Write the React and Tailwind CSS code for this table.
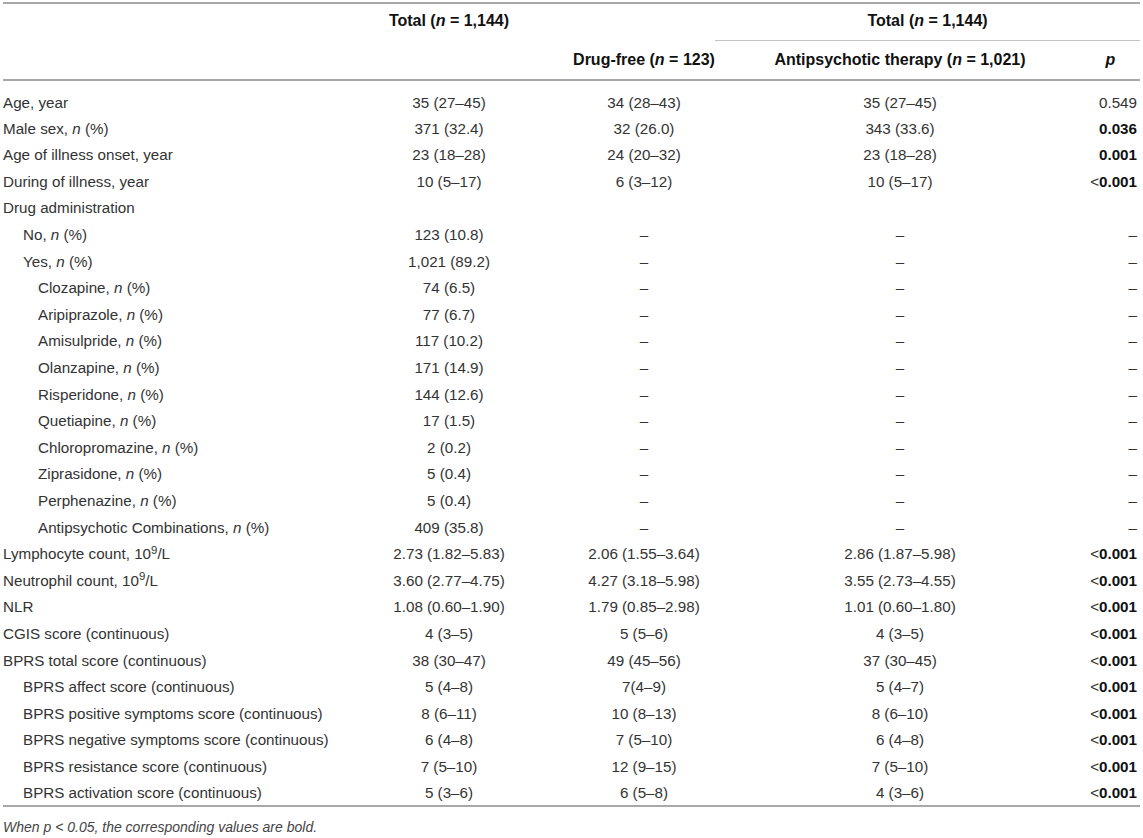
import React from "react";

const N = () => <i>n</i>;

const rows = [
  { l: <>Age, year</>, t: "35 (27–45)", d: "34 (28–43)", a: "35 (27–45)", p: "0.549" },
  { l: <>Male sex, <N /> (%)</>, t: "371 (32.4)", d: "32 (26.0)", a: "343 (33.6)", p: "0.036", b: true },
  { l: <>Age of illness onset, year</>, t: "23 (18–28)", d: "24 (20–32)", a: "23 (18–28)", p: "0.001", b: true },
  { l: <>During of illness, year</>, t: "10 (5–17)", d: "6 (3–12)", a: "10 (5–17)", lt: true },
  { l: <>Drug administration</>, t: "", d: "", a: "", p: "" },
  { l: <>No, <N /> (%)</>, i: 1, t: "123 (10.8)", d: "–", a: "–", p: "–" },
  { l: <>Yes, <N /> (%)</>, i: 1, t: "1,021 (89.2)", d: "–", a: "–", p: "–" },
  { l: <>Clozapine, <N /> (%)</>, i: 2, t: "74 (6.5)", d: "–", a: "–", p: "–" },
  { l: <>Aripiprazole, <N /> (%)</>, i: 2, t: "77 (6.7)", d: "–", a: "–", p: "–" },
  { l: <>Amisulpride, <N /> (%)</>, i: 2, t: "117 (10.2)", d: "–", a: "–", p: "–" },
  { l: <>Olanzapine, <N /> (%)</>, i: 2, t: "171 (14.9)", d: "–", a: "–", p: "–" },
  { l: <>Risperidone, <N /> (%)</>, i: 2, t: "144 (12.6)", d: "–", a: "–", p: "–" },
  { l: <>Quetiapine, <N /> (%)</>, i: 2, t: "17 (1.5)", d: "–", a: "–", p: "–" },
  { l: <>Chloropromazine, <N /> (%)</>, i: 2, t: "2 (0.2)", d: "–", a: "–", p: "–" },
  { l: <>Ziprasidone, <N /> (%)</>, i: 2, t: "5 (0.4)", d: "–", a: "–", p: "–" },
  { l: <>Perphenazine, <N /> (%)</>, i: 2, t: "5 (0.4)", d: "–", a: "–", p: "–" },
  { l: <>Antipsychotic Combinations, <N /> (%)</>, i: 2, t: "409 (35.8)", d: "–", a: "–", p: "–" },
  { l: <>Lymphocyte count, 10<sup>9</sup>/L</>, t: "2.73 (1.82–5.83)", d: "2.06 (1.55–3.64)", a: "2.86 (1.87–5.98)", lt: true },
  { l: <>Neutrophil count, 10<sup>9</sup>/L</>, t: "3.60 (2.77–4.75)", d: "4.27 (3.18–5.98)", a: "3.55 (2.73–4.55)", lt: true },
  { l: <>NLR</>, t: "1.08 (0.60–1.90)", d: "1.79 (0.85–2.98)", a: "1.01 (0.60–1.80)", lt: true },
  { l: <>CGIS score (continuous)</>, t: "4 (3–5)", d: "5 (5–6)", a: "4 (3–5)", lt: true },
  { l: <>BPRS total score (continuous)</>, t: "38 (30–47)", d: "49 (45–56)", a: "37 (30–45)", lt: true },
  { l: <>BPRS affect score (continuous)</>, i: 1, t: "5 (4–8)", d: "7(4–9)", a: "5 (4–7)", lt: true },
  { l: <>BPRS positive symptoms score (continuous)</>, i: 1, t: "8 (6–11)", d: "10 (8–13)", a: "8 (6–10)", lt: true },
  { l: <>BPRS negative symptoms score (continuous)</>, i: 1, t: "6 (4–8)", d: "7 (5–10)", a: "6 (4–8)", lt: true },
  { l: <>BPRS resistance score (continuous)</>, i: 1, t: "7 (5–10)", d: "12 (9–15)", a: "7 (5–10)", lt: true },
  { l: <>BPRS activation score (continuous)</>, i: 1, t: "5 (3–6)", d: "6 (5–8)", a: "4 (3–6)", lt: true },
];

export default function App() {
  return (
    <div
      className="w-[1143px] h-[838px] bg-white text-[#333] overflow-hidden pt-[2px]"
      style={{ fontFamily: '"Liberation Sans", Arial, sans-serif' }}
    >
      <table className="ml-[3px] w-[1137px] table-fixed border-collapse text-[15.2px] leading-none">
        <colgroup>
          <col className="w-[322px]" />
          <col className="w-[248px]" />
          <col className="w-[142px]" />
          <col className="w-[370px]" />
          <col className="w-[55px]" />
        </colgroup>
        <thead className="text-[16px]">
          <tr className="border-t-2 border-[#a8a8a8]">
            <th></th>
            <th className="h-[37px] text-center font-bold text-[#111] align-middle pb-[2px]">
              Total (<i>n</i> = 1,144)
            </th>
            <th></th>
            <th colSpan={2} className="h-[37px] text-center font-bold text-[#111] align-middle pb-[2px] border-b border-[#c4c4c4]">
              Total (<i>n</i> = 1,144)
            </th>
          </tr>
          <tr className="border-b-2 border-[#a8a8a8]">
            <th className="h-[40px]"></th>
            <th></th>
            <th className="text-center font-bold text-[#111] whitespace-nowrap">
              Drug-free (<i>n</i> = 123)
            </th>
            <th className="text-center font-bold text-[#111] whitespace-nowrap">
              Antipsychotic therapy (<i>n</i> = 1,021)
            </th>
            <th className="text-center font-bold text-[#111] pr-[4px]">
              <i>p</i>
            </th>
          </tr>
        </thead>
        <tbody className="border-b-2 border-[#a8a8a8]">
          {rows.map((r, idx) => (
            <tr key={idx} className={idx === 0 ? "h-[35px]" : "h-[26.6px]"}>
              <td
                className={
                  "whitespace-nowrap text-left " +
                  (idx === 0 ? "pt-[9px] " : "") +
                  (r.i === 1 ? "pl-[20px]" : r.i === 2 ? "pl-[35px]" : "pl-0")
                }
              >
                {r.l}
              </td>
              <td className={"text-center whitespace-nowrap " + (idx === 0 ? "pt-[9px]" : "")}>{r.t}</td>
              <td className={"text-center whitespace-nowrap " + (idx === 0 ? "pt-[9px]" : "")}>{r.d}</td>
              <td className={"text-center whitespace-nowrap " + (idx === 0 ? "pt-[9px]" : "")}>{r.a}</td>
              <td className={"text-right whitespace-nowrap pr-[3px] " + (idx === 0 ? "pt-[9px]" : "")}>
                {r.lt ? (
                  <span>
                    <span className="font-normal">&lt;</span>
                    <span className="font-bold text-[#111]">0.001</span>
                  </span>
                ) : r.b ? (
                  <span className="font-bold text-[#111]">{r.p}</span>
                ) : (
                  r.p
                )}
              </td>
            </tr>
          ))}
        </tbody>
      </table>
      <p className="ml-[3px] mt-[13px] text-[14px] italic text-[#444] leading-none">
        When <span>p</span> &lt; 0.05, the corresponding values are bold.
      </p>
    </div>
  );
}
